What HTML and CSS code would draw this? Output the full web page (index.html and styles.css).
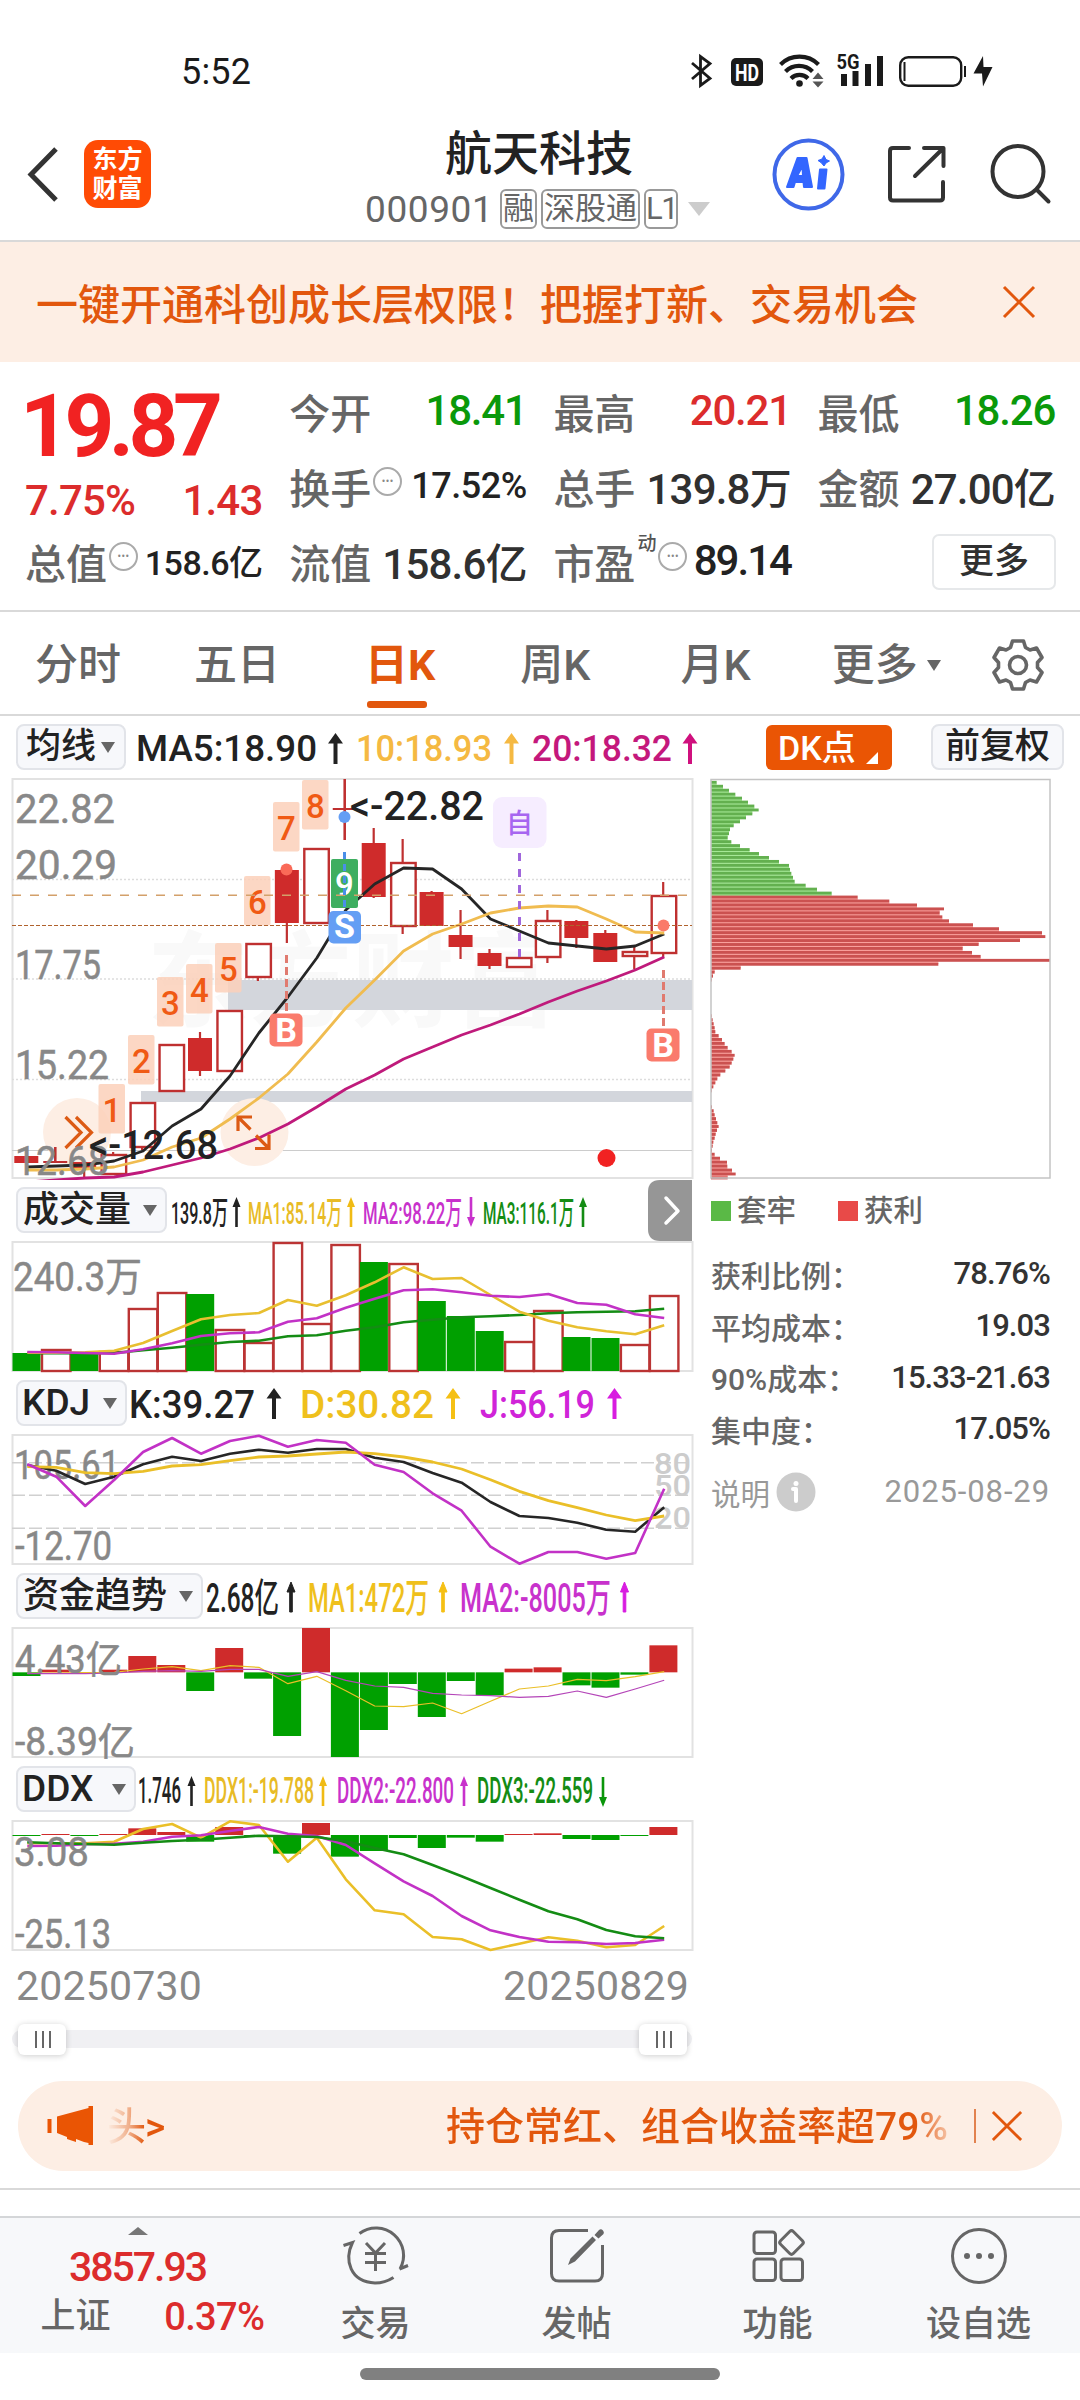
FILE: index.html
```html
<!DOCTYPE html>
<html lang="zh-CN">
<head>
<meta charset="utf-8">
<title>航天科技 000901</title>
<link rel="stylesheet" href="styles.css">
<script src="app.js" defer></script>
</head>
<body>
<div class="statusbar">
  <span class="clock">5:52</span>
  <svg class="status-icons" viewBox="686 50 312 42" width="312" height="42">
    <path d="M692 63 710 78.500 700.500 85.500V56.500L710 63.500 692 79" fill="none" stroke="#1a1a1a" stroke-width="2.800"/>
    <rect x="731" y="58" width="32" height="28" rx="5" fill="#1a1a1a"/>
    <text x="735" y="81" class="hd" textLength="24">HD</text>
    <g fill="none" stroke="#1a1a1a" stroke-width="4.200">
      <path d="M780.500 64.500A27 27 0 0 1 818.500 64.500"/><path d="M785.500 71.500A19 19 0 0 1 812.500 71.500"/><path d="M791 78.500A12 12 0 0 1 808 78.500"/>
    </g>
    <circle cx="799.500" cy="83.500" r="3.300" fill="#1a1a1a"/>
    <path d="M812.500 79 818 72.500 823.500 79ZM812.500 81.500 818 87.500 823.500 81.500Z" fill="#555"/>
    <text x="836.500" y="69" class="g5" textLength="23">5G</text>
    <path d="M841 74h6v12h-6zM852.500 71h6v15h-6zM865 64h6v22h-6zM877 56h6v30h-6z" fill="#1a1a1a"/>
    <rect x="900.200" y="57.200" width="61" height="28.600" rx="8" fill="none" stroke="#1a1a1a" stroke-width="2.400"/>
    <path d="M904.500 62v19M965 66v11" stroke="#1a1a1a" stroke-width="2"/>
    <path d="M983 56 973.500 73.500H982L983 86.500 992.500 67H983.500Z" fill="#1a1a1a"/>
  </svg>
</div>

<header class="topbar">
  <svg class="back" viewBox="26 144 34 62" width="34" height="62"><path d="M56 149 31 174.500 56 200" fill="none" stroke="#333" stroke-width="5"/></svg>
  <div class="logo"><span>东方</span><span>财富</span></div>
  <div class="title">
    <h1>航天科技</h1>
    <div class="sub"><span class="code">000901</span><i class="b1">融</i><i class="b3">深股通</i><i class="b2">L1</i><b class="caret"></b></div>
  </div>
  <svg class="actions" viewBox="768 134 290 80" width="290" height="80">
    <circle cx="808.500" cy="174.500" r="34" fill="none" stroke="#3f68e8" stroke-width="4"/>
    <g fill="#3366ff" stroke="#3366ff" stroke-width="2" stroke-linejoin="round">
      <path fill-rule="evenodd" d="M787 187 797.500 158H806.500L812 187H804L803.500 182H795L793.500 187ZM797 176H803L802.500 166Z"/>
      <path d="M820 169.500H826.500L824.500 188.500H818Z"/><path d="M824 155.500 826 159.500 829.500 161 826 163 824 166 821 162.500 818 160.500 822 159Z" stroke-width="1"/>
    </g>
    <g fill="none" stroke="#333" stroke-width="4" stroke-linecap="round" stroke-linejoin="round">
      <path d="M909 148H893Q890 148 890 151V197.500Q890 200.500 893 200.500H940Q943 200.500 943 197.500V182M924 148H943.500V166M943 148.500 915 176"/>
      <circle cx="1018" cy="171.500" r="25.500"/><path d="M1037 190 1048.500 201.500"/>
    </g>
  </svg>
</header>

<div class="promo">
  <span>一键开通科创成长层权限！把握打新、交易机会</span>
  <svg viewBox="0 0 36 36" width="36" height="36"><path d="M3 3 33 33M33 3 3 33" stroke="#e2570d" stroke-width="3"/></svg>
</div>

<section class="quote">
  <div class="price-block">
    <div class="price">19.87</div>
    <div class="change"><span>7.75%</span><span>1.43</span></div>
  </div>
  <div class="cell"><label>今开</label><em class="green">18.41</em></div>
  <div class="cell"><label>最高</label><em class="red">20.21</em></div>
  <div class="cell"><label>最低</label><em class="green">18.26</em></div>
  <div class="cell"><label>换手</label><u class="dots">•••</u><em class="small">17.52%</em></div>
  <div class="cell"><label>总手</label><em>139.8万</em></div>
  <div class="cell"><label>金额</label><em>27.00亿</em></div>
  <div class="cell"><label>总值</label><u class="dots">•••</u><em class="small cap">158.6亿</em></div>
  <div class="cell"><label>流值</label><em>158.6亿</em></div>
  <div class="cell"><label>市盈</label><sup>动</sup><u class="dots">•••</u><em class="pe">89.14</em></div>
  <div class="cell end"><button class="more">更多</button></div>
</section>

<nav class="tabs">
  <span>分时</span><span>五日</span><span class="on">日K</span><span>周K</span><span>月K</span><span class="drop">更多<b class="caret dark"></b></span>
  <svg viewBox="-28 -28 56 56" width="56" height="56"><g fill="none" stroke="#666" stroke-width="3.600" stroke-linejoin="round"><path d="M-5.500 -24H5.500L7.500 -17.500 12 -15 18.500 -17 24 -7.500 19.500 -2.500V2.500L24 7.500 18.500 17 12 15 7.500 17.500 5.500 24H-5.500L-7.500 17.500 -12 15 -18.500 17 -24 7.500 -19.500 2.500V-2.500L-24 -7.500 -18.500 -17 -12 -15 -7.500 -17.500Z"/><circle r="8.500"/></g></svg>
</nav>

<div class="toolbar">
  <button class="pick ma">均线<b class="caret dark"></b></button>
  <svg class="legend" viewBox="134 724 568 46" width="568" height="46">
    <g class="l36"><text x="136" y="761" textLength="181" fill="#222">MA5:18.90</text><text x="356" y="761" textLength="136" fill="#f5b942">10:18.93</text><text x="532" y="761" textLength="140" fill="#c4187c">20:18.32</text></g>
    <use href="#up" x="335.500" y="733" color="#222"/><use href="#up" x="511.500" y="733" color="#f5b942"/><use href="#up" x="690" y="733" color="#d0107e"/>
    <defs><symbol id="up" overflow="visible"><path d="M0 0 7.500 10.500H2V31H-2V10.500H-7.500Z" fill="currentColor"/></symbol>
    <symbol id="upn" overflow="visible"><path d="M0 0 4 10H1.300V30H-1.300V10H-4Z" fill="currentColor"/></symbol>
    <symbol id="downn" overflow="visible"><path d="M0 30 4 20H1.300V0H-1.300V20H-4Z" fill="currentColor"/></symbol></defs>
  </svg>
  <button class="dk">DK点<b></b></button>
  <button class="pick fq">前复权</button>
</div>

<main class="body">
<div class="left">
  <svg class="chart" viewBox="0 776 700 404" width="700" height="404">
    <rect x="12.500" y="779" width="680" height="399" class="frame"/>
    <text x="147" y="1019" class="wm" textLength="410">东方财富</text>
    <path d="M12 879.500H692M12 979H692M12 1079.500H692" stroke="#ddd" stroke-width="1.500" stroke-dasharray="2 2"/>
    <path d="M12 1150.500H692" stroke="#ccc"/>
    <path d="M228 980H692V1010H228ZM141 1091H692V1102H141Z" fill="#d3d6dc"/>
    <circle cx="77" cy="1132" r="34" fill="#fdeee4"/><circle cx="254.500" cy="1132" r="34" fill="#fdeee4"/>
    <g id="candles"></g>
    <g id="counts"></g>
    <g id="ma"></g>
    <path d="M12 895.200H692" stroke="#d3a06a" stroke-width="1.500" stroke-dasharray="9 9"/>
    <path d="M12 925.500H692" stroke="#b0622d" stroke-width="1.200" stroke-dasharray="4 2"/>
    <path d="M286.500 955V1012M663.500 970V1026" stroke="#e07a6f" stroke-width="3" stroke-dasharray="8 4"/>
    <path d="M344.500 852V911" stroke="#4a8fe8" stroke-width="3" stroke-dasharray="7 5"/>
    <path d="M519.500 853V957" stroke="#a066dc" stroke-width="3" stroke-dasharray="8 8"/>
    <circle cx="344.500" cy="817" r="6" fill="#649ef4"/><circle cx="286.500" cy="869.500" r="6" fill="#fa6a58"/><circle cx="663.500" cy="925.500" r="6" fill="#fa7a6a"/><circle cx="606.500" cy="1158" r="9" fill="#f12222"/>
    <g class="tag"><rect x="328.500" y="911" width="32.500" height="32.500" rx="5" fill="#649ef4"/><text x="344.500" y="938">S</text>
    <rect x="269.500" y="1013.500" width="33" height="33" rx="5" fill="#fa7b6c"/><text x="286" y="1041.500">B</text>
    <rect x="646.500" y="1028.500" width="33" height="33" rx="5" fill="#fa7b6c"/><text x="663" y="1056.500">B</text></g>
    <rect x="493" y="797" width="53.500" height="51" rx="9" fill="#f6edff"/><text x="519.500" y="833" class="zi">自</text>
    <g fill="none" stroke="#dc5a14" stroke-width="3.200"><path d="M65.500 1117 81 1132.500 65.500 1148M76 1117 91.500 1132.500 76 1148M250.500 1129.500 238.500 1117.500M238 1131V1117H252M256 1135.500 268.500 1148M269 1134.500V1148.500H255"/></g>
    <g class="ax l40"><text x="15" y="822.500" textLength="100">22.82</text><text x="15" y="879" textLength="102">20.29</text><text x="15" y="979" textLength="86">17.75</text><text x="15" y="1079" textLength="94">15.22</text><text x="15" y="1175" textLength="94">12.68</text></g>
    <g class="l40" fill="#222"><text x="350" y="820" textLength="134">&lt;-22.82</text><text x="89" y="1159" textLength="129">&lt;-12.68</text></g>
  </svg>

  <div class="ind volume">
    <button class="pick">成交量<b class="caret dark"></b></button>
    <svg class="legend" viewBox="170 1180 530 61" width="530" height="61">
      <g class="l33"><text x="171" y="1224" textLength="57" fill="#222">139.8万</text><text x="248" y="1224" textLength="94" fill="#e8bb26">MA1:85.14万</text><text x="363" y="1224" textLength="99" fill="#c832cc">MA2:98.22万</text><text x="483" y="1224" textLength="91" fill="#148c14">MA3:116.1万</text></g>
      <use href="#upn" x="236.500" y="1197" color="#222"/><use href="#upn" x="351" y="1197" color="#f0bb14"/><use href="#downn" x="471" y="1197" color="#c832cc"/><use href="#upn" x="583" y="1197" color="#148c14"/>
      <path d="M692 1180V1241H660Q648 1241 648 1229V1192Q648 1180 660 1180Z" fill="#969696"/><path d="M666 1198 678 1211 666 1223" fill="none" stroke="#fff" stroke-width="3.500" stroke-linecap="round" stroke-linejoin="round"/>
    </svg>
  </div>
  <svg class="chart" viewBox="0 1241 700 132" width="700" height="132">
    <rect x="12.500" y="1242" width="680" height="129" class="frame"/><g id="vol"></g>
    <g class="ax l40"><text x="13" y="1290.500" textLength="129">240.3万</text></g>
  </svg>

  <div class="ind kdj">
    <button class="pick">KDJ<b class="caret dark"></b></button>
    <svg class="legend" viewBox="130 1373 570 61" width="570" height="61">
      <g class="l38"><text x="129" y="1418" textLength="126" fill="#222">K:39.27</text><text x="300" y="1418" textLength="134" fill="#efc01c">D:30.82</text><text x="480" y="1418" textLength="115" fill="#d024d8">J:56.19</text></g>
      <use href="#up" x="274" y="1388" color="#222"/><use href="#up" x="453" y="1388" color="#f5c014"/><use href="#up" x="614.500" y="1388" color="#d81ce0"/>
    </svg>
  </div>
  <svg class="chart" viewBox="0 1434 700 132" width="700" height="132">
    <rect x="12.500" y="1435" width="680" height="129" class="frame"/>
    <path d="M12 1462.700H692M12 1495.300H692M12 1528.300H692" stroke="#d0d0d0" stroke-width="1.500" stroke-dasharray="13 4"/>
    <g class="ax l40"><text x="14" y="1479" textLength="106">105.61</text><text x="15" y="1560" textLength="97">-12.70</text></g>
    <g class="l31" fill="#ccc"><text x="654" y="1474" textLength="37">80</text><text x="654" y="1495.500" textLength="37">50</text><text x="654" y="1528" textLength="37">20</text></g>
    <g id="kdj"></g>
  </svg>

  <div class="ind fund">
    <button class="pick">资金趋势<b class="caret dark"></b></button>
    <svg class="legend" viewBox="206 1566 494 61" width="494" height="61">
      <g class="l40"><text x="206" y="1612" textLength="73" fill="#222">2.68亿</text><text x="308" y="1612" textLength="121" fill="#efc01c">MA1:472万</text><text x="460" y="1612" textLength="151" fill="#c832cc">MA2:-8005万</text></g>
      <use href="#upn" x="291" y="1582" color="#222" stroke="currentColor"/><use href="#upn" x="443" y="1582" color="#f5c014" stroke="currentColor"/><use href="#upn" x="624.500" y="1582" color="#d81ce0" stroke="currentColor"/>
    </svg>
  </div>
  <svg class="chart" viewBox="0 1627 700 132" width="700" height="132">
    <rect x="12.500" y="1628" width="680" height="129" class="frame"/><g id="fund"></g>
    <g class="ax l38"><text x="15" y="1672.500" textLength="107">4.43亿</text><text x="15" y="1755" textLength="120">-8.39亿</text></g>
  </svg>

  <div class="ind ddx">
    <button class="pick">DDX<b class="caret dark"></b></button>
    <svg class="legend" viewBox="136 1759 564 61" width="564" height="61">
      <g class="l37"><text x="138" y="1803" textLength="43" fill="#222">1.746</text><text x="204" y="1803" textLength="110" fill="#e8bb26">DDX1:-19.788</text><text x="337" y="1803" textLength="117" fill="#c832cc">DDX2:-22.800</text><text x="477" y="1803" textLength="116" fill="#148c14">DDX3:-22.559</text></g>
      <use href="#upn" x="191.500" y="1776" color="#222"/><use href="#upn" x="323" y="1776" color="#f0bb14"/><use href="#upn" x="464" y="1776" color="#c832cc"/><use href="#downn" x="603" y="1777" color="#0a960a"/>
    </svg>
  </div>
  <svg class="chart" viewBox="0 1820 700 132" width="700" height="132">
    <rect x="12.500" y="1821" width="680" height="129" class="frame"/><g id="ddx"></g>
    <g class="ax l40"><text x="14" y="1866" textLength="75">3.08</text><text x="15" y="1948" textLength="96">-25.13</text></g>
  </svg>

  <div class="dates"><span>20250730</span><span>20250829</span></div>
  <div class="range"><i></i><i></i></div>
</div>

<aside class="right">
  <svg class="chips" viewBox="708 776 346 404" width="346" height="404">
    <g id="chips"></g>
    <rect x="711" y="779.500" width="339" height="398.500" fill="none" stroke="#c4c4c4" stroke-width="1.500"/>
  </svg>
  <div class="keys"><span><i class="g"></i>套牢</span><span><i class="r"></i>获利</span></div>
  <dl>
    <div><dt>获利比例：</dt><dd>78.76%</dd></div>
    <div><dt>平均成本：</dt><dd>19.03</dd></div>
    <div><dt>90%成本：</dt><dd>15.33-21.63</dd></div>
    <div><dt>集中度：</dt><dd>17.05%</dd></div>
  </dl>
  <div class="note"><span>说明<svg viewBox="0 0 40 40" width="40" height="40"><circle cx="20" cy="20" r="19.500" fill="#ccc"/><circle cx="20" cy="11.500" r="2.500" fill="#fff"/><path d="M17 17H20V29" fill="none" stroke="#fff" stroke-width="4" stroke-linecap="round" stroke-linejoin="round"/></svg></span><time>2025-08-29</time></div>
</aside>
</main>

<div class="ticker">
  <svg viewBox="46 2104 50 44" width="50" height="44"><path d="M49.500 2119V2133" stroke="#ea5504" stroke-width="4"/><path d="M57 2116.500 88.500 2108V2106H93V2145H88.500V2143L84 2142 76 2139V2142L67 2139V2137L57 2133Z" fill="#ea5504"/></svg>
  <span class="tail">头&gt;</span>
  <span class="head">持仓常红、组合收益率超79%</span>
  <svg class="x" viewBox="0 0 34 34" width="34" height="34"><path d="M2 2 32 32M32 2 2 32" stroke="#e2570d" stroke-width="3"/></svg>
</div>

<footer class="bottom">
  <div class="index"><b class="caret-up"></b><strong>3857.93</strong><p><span>上证</span><em>0.37%</em></p></div>
  <div class="tool"><svg viewBox="340 2224 72 64" width="72" height="64"><g fill="none" stroke="#666" stroke-width="3"><path d="M359.500 2233.500A27.500 27.500 0 0 1 400 2269M343.500 2245.500 352.500 2242.500C344 2260 350 2282 375 2283 382 2283 388 2281 393.500 2277.500M399.500 2269 408 2265.500"/><path d="M366 2243 375.500 2253 385 2243M365 2253.500H386M365 2262.500H386M375.500 2253V2271"/></g></svg><span>交易</span></div>
  <div class="tool"><svg viewBox="541 2224 72 64" width="72" height="64"><path d="M588 2230.500H559Q551.500 2230.500 551.500 2238V2273.500Q551.500 2281 559 2281H595Q602.500 2281 602.500 2273.500V2245" fill="none" stroke="#666" stroke-width="3"/><path d="M592.500 2236.500 596 2240 575 2261.500 568 2265 570.500 2258.500ZM594.500 2235 599 2230Q601 2228.500 603 2230.500 604.500 2232 603.500 2234L598.500 2238.500Z" fill="#666"/></svg><span>发帖</span></div>
  <div class="tool"><svg viewBox="742 2224 72 64" width="72" height="64"><g fill="none" stroke="#666" stroke-width="3"><rect x="754" y="2232" width="21.500" height="21.500" rx="3"/><rect x="754" y="2259" width="21.500" height="21.500" rx="3"/><rect x="781" y="2259" width="21.500" height="21.500" rx="3"/><rect x="-9" y="-9" width="18" height="18" rx="2.500" transform="translate(791.500 2242.500) rotate(45)"/></g></svg><span>功能</span></div>
  <div class="tool"><svg viewBox="943 2224 72 64" width="72" height="64"><circle cx="979" cy="2256" r="26.500" fill="none" stroke="#666" stroke-width="3"/><g fill="#666"><circle cx="967" cy="2256" r="3"/><circle cx="979" cy="2256" r="3"/><circle cx="991" cy="2256" r="3"/></g></svg><span>设自选</span></div>
</footer>
<div class="homebar"></div>
</body>
</html>
```
FILE: styles.css
```css
* { box-sizing: border-box; }
body { margin: 0; width: 1080px; height: 2400px; overflow: hidden; background: #fff; color: #222; font-family: Roboto, "Noto Sans CJK SC", sans-serif; font-weight: 500; }
svg { display: block; flex: none; }
button { font: inherit; color: inherit; padding: 0; border: 0; flex: none; }
em, i { font-style: normal; }
.green { color: #0a990a; }
.red { color: #dc2c2c; }

.caret { width: 0; height: 0; border: 11px solid transparent; border-top: 14px solid #ccc; border-bottom: 0; }
.caret.dark { border-width: 11px 7.500px 0; border-top-color: #666; }

.statusbar { height: 110px; padding: 33px 82px 0 181px; display: flex; justify-content: space-between; align-items: center; }
.clock { font-size: 36px; font-weight: 400; letter-spacing: .2px; color: #1a1a1a; }
.status-icons { margin-top: -1px; }
.hd { font: 700 23px Roboto, sans-serif; fill: #fff; }
.g5 { font: 700 20px Roboto, sans-serif; fill: #1a1a1a; }

.topbar { height: 132px; border-bottom: 2px solid #d9d9d9; display: flex; align-items: flex-start; padding-left: 26px; }
.back { margin-top: 34px; }
.logo { margin: 30px 0 0 24px; width: 67px; height: 68px; border-radius: 14px; background: #ff4b05; color: #fff; display: flex; flex-direction: column; align-items: center; justify-content: center; font-weight: 700; font-size: 25px; line-height: 29px; }
.title { width: 400px; margin: 18px 0 0 189px; }
h1 { margin: 0; font-size: 47px; line-height: 52px; font-weight: 500; text-align: center; width: 398px; }
.sub { display: flex; align-items: center; height: 42px; margin-top: 8px; padding-left: 25px; color: #666; font-size: 37px; }
.code { width: 135px; font-weight: 400; letter-spacing: .6px; }
.sub i { height: 40px; border: 2px solid #999; border-radius: 6px; font-size: 31px; line-height: 36px; text-align: center; margin-right: 4px; font-weight: 400; }
.b1 { width: 37px; } .b3 { width: 99px; } .b2 { width: 34px; letter-spacing: -1.500px; }
.sub .caret { margin-left: 6px; }
.actions { margin: 24px 0 0 28px; }

.promo { height: 120px; background: #fdeee4; color: #e2570d; display: flex; align-items: center; justify-content: space-between; padding: 0 43px 0 36px; font-size: 42px; }
.promo span { margin-top: -2px; }

.quote { height: 250px; border-bottom: 2px solid #d9d9d9; padding: 11px 25px 0 25px; display: grid; grid-template-columns: repeat(4, 237.500px); grid-template-rows: repeat(3, 75px); column-gap: 26.700px; }
.price-block { grid-row: span 2; }
.price { color: #f12222; font-size: 87px; font-weight: 700; line-height: 106px; letter-spacing: -5.500px; height: 103px; margin-left: -5px; }
.change { display: flex; justify-content: space-between; color: #dc2c2c; font-size: 42px; line-height: 50px; letter-spacing: -.8px; }
.cell { display: flex; align-items: center; font-size: 42px; white-space: nowrap; }
.cell label { font-size: 41px; color: #666; }
.cell em { margin-left: auto; letter-spacing: -1.200px; }
.cell em:not([class]) { color: #303030; letter-spacing: -.8px; }
.cell .small { font-size: 36px; letter-spacing: -.5px; }
.cell .cap { font-size: 34px; }
.cell .pe { letter-spacing: -2px; }
.dots { width: 29px; height: 29px; margin: -8px 0 0 2px; border: 2px solid #aaa; border-radius: 50%; font-size: 10px; line-height: 25px; text-align: center; color: #888; text-decoration: none; letter-spacing: .5px; }
.cell sup { font-size: 19px; align-self: flex-start; color: #555; line-height: 28px; margin-top: 7px; margin-left: 2px; }
.cell .dots { flex: none; }
.end { justify-content: flex-end; }
.more { width: 124px; height: 56px; margin: 2px -1px 0 0; background: #fff; border: 2px solid #e6e8ea; border-radius: 7px; font-size: 35px; line-height: 50px; color: #303030; }

.tabs { height: 104px; border-bottom: 2px solid #d9d9d9; display: flex; align-items: center; padding: 4px 34px 0 35px; font-size: 43px; color: #666; }
.tabs span { position: relative; line-height: 60px; }
.tabs span:nth-child(2) { margin-left: 73px; }
.tabs span:nth-child(3) { margin-left: 85px; }
.tabs span:nth-child(4) { margin-left: 85px; }
.tabs span:nth-child(5) { margin-left: 90px; }
.tabs .on { color: #e2570d; font-weight: 700; }
.tabs .on::after { content: ""; position: absolute; left: 2px; bottom: -13px; width: 60px; height: 7px; border-radius: 3px; background: #e2570d; }
.tabs .drop { margin-left: 81px; display: flex; align-items: center; gap: 9px; }
.tabs svg { margin: -1px 0 0 auto; }

.toolbar { height: 60px; padding: 8px 0 0 16px; display: flex; }
.pick { height: 46px; background: #f7f8fb; border: 2px solid #e2e4e9; border-radius: 8px; font-size: 36px; display: flex; align-items: center; color: #222; white-space: nowrap; line-height: 42px; }
.ma { width: 110px; padding-left: 8px; gap: 5px; font-size: 35px; }
.legend { margin-left: 8px; }
.dk { margin-left: 64px; margin-top: 1px; width: 126px; height: 45px; border-radius: 6px; background: #ea5504; color: #fff; font-size: 34px; line-height: 46px; display: flex; padding-left: 12px; font-weight: 500; }
.dk b { align-self: flex-end; margin: 0 0 6px 10px; border: 6px solid #fff; border-left-color: transparent; border-top-color: transparent; }
.fq { width: 133px; margin-left: 39px; justify-content: center; font-size: 35px; }

.body { display: flex; height: 1294px; }
.left { width: 700px; }
.frame { fill: none; stroke: #e2e2e2; stroke-width: 2; }
.wm { font: 700 104px "Noto Sans CJK SC", sans-serif; fill: #f9f9f9; }
.ax { fill: #888; }
text { font-weight: 500; }
.l40, .l38, .l37, .l36, .l33, .l31 { font-family: Roboto, "Noto Sans CJK SC", sans-serif; }
.l40 { font-size: 40px; } .l38 { font-size: 38px; } .l37 { font-size: 37px; } .l36 { font-size: 36px; } .l33 { font-size: 32px; } .l31 { font-size: 30px; }
.ax text { font-weight: 400; stroke: #888; stroke-width: .5px; }
.tag text { font-size: 34px; font-weight: 700; fill: #fff; text-anchor: middle; }
.count { font-size: 33px; fill: #f05a14; text-anchor: middle; }
.zi { font-size: 27px; fill: #a766f0; text-anchor: middle; }

.ind { height: 61px; padding-left: 16px; display: flex; }
.ind .pick { margin-top: 7px; padding: 0 8px 0 5px; justify-content: space-between; }
.ind .legend { margin-left: 0; }
.volume .pick { width: 151px; margin-right: 3px; }
.kdj .pick { width: 111px; margin-right: 3px; }
.fund .pick { width: 187px; margin-right: 3px; }
.ddx .pick { width: 120px; }
.ddx .pick, .kdj .pick { font-size: 37px; padding-left: 4px; }

.dates { height: 72px; padding: 9px 11px 0 16px; display: flex; justify-content: space-between; color: #888; font-size: 41px; font-weight: 400; line-height: 50px; letter-spacing: .2px; }
.range { height: 18px; width: 680px; margin: 6px 0 0 12px; background: #f0f0f3; border-radius: 9px; display: flex; justify-content: space-between; align-items: center; padding: 0 5px 0 6px; }
.range i { width: 48px; height: 31px; border-radius: 6px; background: linear-gradient(#666, #666) 17px 7px / 2px 17px no-repeat, linear-gradient(#666, #666) 24px 7px / 2px 17px no-repeat, linear-gradient(#666, #666) 31px 7px / 2px 17px no-repeat, #fff; box-shadow: 0 1px 6px rgba(0, 0, 0, .2); }

.right { padding-left: 8px; width: 350px; }
.keys { display: flex; gap: 42px; padding-left: 3px; height: 60px; align-items: center; font-size: 29.500px; color: #666; padding-top: 2px; }
.keys span { display: flex; align-items: center; gap: 6px; line-height: 30px; }
.keys i { width: 20px; height: 20px; background: #5ab946; }
.keys .r { background: #e84a48; }
dl { margin: 8px 0 0; padding-left: 3px; font-size: 31px; }
dl div { display: flex; justify-content: space-between; height: 51.700px; align-items: center; width: 339px; }
dt { color: #666; font-size: 30px; }
dd { margin: 0; color: #333; letter-spacing: -.9px; }
.note { display: flex; justify-content: space-between; align-items: center; width: 339px; margin: 16px 0 0 3px; font-size: 31px; color: #999; font-weight: 400; }
.note span { display: flex; align-items: center; gap: 6px; font-size: 29.500px; }
.note time { letter-spacing: .9px; }

.ticker { margin: 11px 18px 0; width: 1044px; height: 90px; border-radius: 45px; background: #fdeee4; color: #e2570d; display: flex; align-items: center; padding-left: 28px; font-size: 39px; line-height: 60px; }
.ticker span { -webkit-background-clip: text; background-clip: text; color: transparent; white-space: nowrap; margin-top: 2px; }
.tail { margin-left: 11px; width: 62px; letter-spacing: -1px; background-image: linear-gradient(90deg, #fdeee4, #f0b08c 22px, #e2570d 38px); }
.head { margin-left: 277px; width: 508px; background-image: linear-gradient(90deg, #e2570d 470px, #fdeee4 515px); }
.ticker .x { margin-left: 20px; padding: 0 0 0 15px; width: 49px; border-left: 2px solid #e2824f; height: 34px; }

.bottom { margin-top: 17px; border-top: 2px solid #d9d9d9; padding-top: 26px; height: 165px; display: flex; color: #666; background: linear-gradient(#fff 26px, #d4d6d8 26px 28px, #f7f8fa 28px); }
.index { width: 275px; display: flex; flex-direction: column; align-items: center; padding-top: 11px; }
.caret-up { border: 10px solid transparent; border-top: 0; border-bottom: 8px solid #777; }
.index strong { color: #dc2c2c; font-size: 41px; font-weight: 500; line-height: 50px; margin-top: 7px; letter-spacing: -2px; }
.index p { margin: 2px 0 0 30px; width: 224px; display: flex; justify-content: space-between; font-size: 35px; line-height: 46px; }
.index em { color: #dc2c2c; font-size: 38px; letter-spacing: -.6px; }
.tool { width: 201px; display: flex; flex-direction: column; align-items: center; font-size: 35px; }
.tool svg { margin-top: 8px; }
.tool span { line-height: 50px; margin-top: 12px; }
.homebar { width: 360px; height: 12px; border-radius: 6px; background: #808080; margin: 15px auto 0; }
```
FILE: app.js
```js
// Text with a fixed length condenses its glyphs, not only the gaps between them
document.querySelectorAll('text[textLength]').forEach(t => t.setAttribute('lengthAdjust', 'spacingAndGlyphs'));

const STEP = 28.95;
const cx = i => 26.3 + i * STEP;
const put = (id, s) => { document.getElementById(id).innerHTML = s; };
const line = (ys, color, w, map) =>
  `<polyline fill="none" stroke="${color}" stroke-width="${w}" stroke-linejoin="round" points="${ys.map((y, i) => (cx(i) + 1).toFixed(1) + ',' + map(y).toFixed(1)).join(' ')}"/>`;

// Candles: kind (f filled, h hollow, c cross), body top, body bottom, wick top, wick bottom
const candles = [
  ['f',1156,1163,1156,1163],['c',1162,1162,1147,1162],['f',1162,1168,1162,1178],['h',1154,1174,1152,1174],
  ['h',1102,1147,1102,1150],['h',1044,1091,1044,1091],['f',1038,1071,1032,1076],['h',1010,1071,1010,1071],
  ['h',943,977,943,981],['f',870,923,870,943],['h',848,923,848,923],['c',809,809,779,840],
  ['f',843,897,828,898],['h',862,926,839,934],['f',892,926,891,926],['f',935,947,910,959],
  ['f',953,966,949,969],['h',957,967,957,967],['h',920,957,910,963],['f',921,938,920,948],
  ['f',933,962,930,962],['h',951,956,947,969],['h',895,953,882,958]
];
put('candles', candles.map(([k, t, b, wt, wb], i) => {
  const x = cx(i), c = '#bf3030';
  let s = `<path d="M${x} ${wt}V${t}M${x} ${b}V${wb}" stroke="${c}" stroke-width="2.2"/>`;
  if (k === 'f') s += `<rect x="${x - 12}" y="${t}" width="24" height="${b - t}" fill="#cf2b2b"/>`;
  if (k === 'h') s += `<rect x="${x - 11.5}" y="${t + 1}" width="24.5" height="${b - t - 1}" fill="#fff" stroke="${c}" stroke-width="2.4"/>`;
  if (k === 'c') s += `<path d="M${x - 12} ${t}H${x + 12}M${x} ${wt}V${wb}" stroke="${c}" stroke-width="2.2"/>`;
  return s;
}).join(''));

const counts = [[98.5,1084],[128,1035],[157,977],[186,964],[215,943],[244,876],[273,802],[302,780]];
put('ma', [
  [[1167,1166,1165,1161,1151,1126,1109,1076,1033,997,958,910,884,868,869,889,919,931,943,946,949,946,934], '#262626'],
  [[1170,1170,1169,1167,1160,1147,1138,1119,1098,1074,1042,1008,980,951,934,924,913,908,906,907,919,932,933], '#f0bc50'],
  [[1182,1180,1178,1177,1172,1165,1158,1149,1138,1124,1107,1089,1075,1059,1047,1035,1025,1014,1002,991,981,970,957], '#bf1a7b']
].map(([d, c]) => line(d, c, 2.8, y => y)).join('') +
  '<rect x="331" y="859" width="27" height="49" rx="2" fill="#3eae60"/><text class="count" x="344.5" y="896" style="fill:#fff">9</text>');
put('counts', counts.map(([x, y], i) =>
  `<rect x="${x}" y="${y}" width="26.500" height="49.500" rx="2" fill="#fbd0ba" opacity=".85"/><text class="count" x="${x + 13.3}" y="${y + 37.5}">${i + 1}</text>`).join(''));

const G = '#00a000', R = '#cf2b2b';
const bar = (i, y1, y2, c) => `<rect x="${(12.5 + i * STEP).toFixed(1)}" y="${Math.min(y1, y2)}" width="28" height="${Math.max(1, Math.abs(y2 - y1))}" fill="${c}"/>`;

// Volume
const vol = 'g1353 r1349 g1353 r1351 r1308 r1292 g1294 r1329 r1342 r1242 r1323 r1244 g1262 r1263 g1301 g1316 g1331 r1341 r1310 g1337 g1338 r1344 r1295'.split(' ');
const vm = y => 1180 + y / 3;
put('vol', vol.map((v, i) => {
  const y = +v.slice(1);
  return v[0] === 'g' ? bar(i, y, 1371, G)
    : `<rect x="${(13 + i * STEP).toFixed(1)}" y="${y + 1}" width="28.5" height="${1370 - y}" fill="#fff" stroke="#bb3434" stroke-width="2.4"/>`;
}).join('') +
  line([520,520,520,519,511,503,494,486,482,469,466,452,442,427,419,412,409,405,400,397,395,394,386], '#148c14', 2.6, vm) +
  line([518,518,517,512,489,453,418,405,399,360,377,346,307,262,297,294,345,395,422,442,454,463,436], '#e8bf30', 2.6, vm) +
  line([516,517,519,521,508,490,468,460,457,425,415,383,356,331,328,337,347,351,342,369,374,403,414], '#c232c6', 2.6, vm));

// KDJ
const km = y => 1430 + y / 3;
put('kdj',
  line([105,122,162,140,103,80,93,71,59,68,57,57,83,96,129,158,216,258,264,278,299,305,232], '#262626', 2.6, km) +
  line([110,112,128,131,124,108,104,92,81,78,72,66,71,81,96,117,149,184,212,233,255,272,258], '#eabf28', 2.8, km) +
  line([103,140,228,150,66,24,71,33,17,50,30,38,104,126,190,242,350,401,366,366,386,369,176], '#c232c6', 2.6, km));

// Net fund flow
const fund = [738,719,730,719,678,705,783,654,746,918,594,981,900,762,861,753,796,716,712,766,773,734,646];
put('fund', fund.map((y, i) => bar(i, km(727), km(y), y > 727 && i !== 2 ? G : R)).join('') +
  line([730,729,728,727,717,710,722,707,712,761,739,782,828,830,819,851,814,777,768,748,752,740,725], '#eabf28', 1.2, km) +
  line([731,731,731,729,724,722,724,718,718,739,725,751,768,772,790,795,797,802,799,783,802,777,751], '#b445b8', 1.2, km));

// DDX
const dm = y => 1760 + y / 3;
const ddx = [228,222,228,222,205,216,245,201,228,281,189,290,273,234,264,233,245,222,220,237,240,228,201];
put('ddx', ddx.map((y, i) => bar(i, dm(225), dm(y), y > 225 ? G : R)).join('') +
  line([250,250,250,245,207,192,233,184,195,305,233,358,451,463,531,538,570,551,532,542,562,555,498], '#eabf28', 2.6, dm) +
  line([258,257,253,251,245,230,226,213,201,221,228,255,310,364,408,468,511,531,545,547,552,549,539], '#c232c6', 2.6, dm) +
  line([247,250,252,254,248,243,239,233,227,229,231,244,264,283,315,349,384,419,454,478,510,529,535], '#148c14', 2.6, dm));

// Chip distribution, top to bottom
const chips = [17,36,54,73,93,111,130,143,124,105,87,68,57,54,50,61,87,116,144,174,204,234,237,241,246,251,284,318,362,
  440,535,618,699,686,694,714,786,864,993,1003,927,803,755,783,809,1017,682,89,11,6,2,0,0,0,0,0,0,0,0,
  2,5,8,11,13,23,33,41,50,62,71,67,62,56,43,28,19,13,7,2,0,0,0,3,8,11,15,19,23,18,14,11,7,5,3,11,27,48,49,63,74,50];
put('chips', chips.map((w, i) => {
  if (!w) return '';
  const y = 710 + (217 + i * 11.87) / 3, g = i < 29;
  const next = Math.min(w, chips[i + 1] || 0) / 3;
  return `<rect x="711" y="${y + 1}" width="${next}" height="2.6" fill="${g ? '#a5e896' : '#f9a09c'}"/><rect x="711" y="${y - 1.5}" width="${w / 3}" height="2.900" fill="${g ? '#63b04f' : '#cb5150'}"/>`;
}).join(''));
```
